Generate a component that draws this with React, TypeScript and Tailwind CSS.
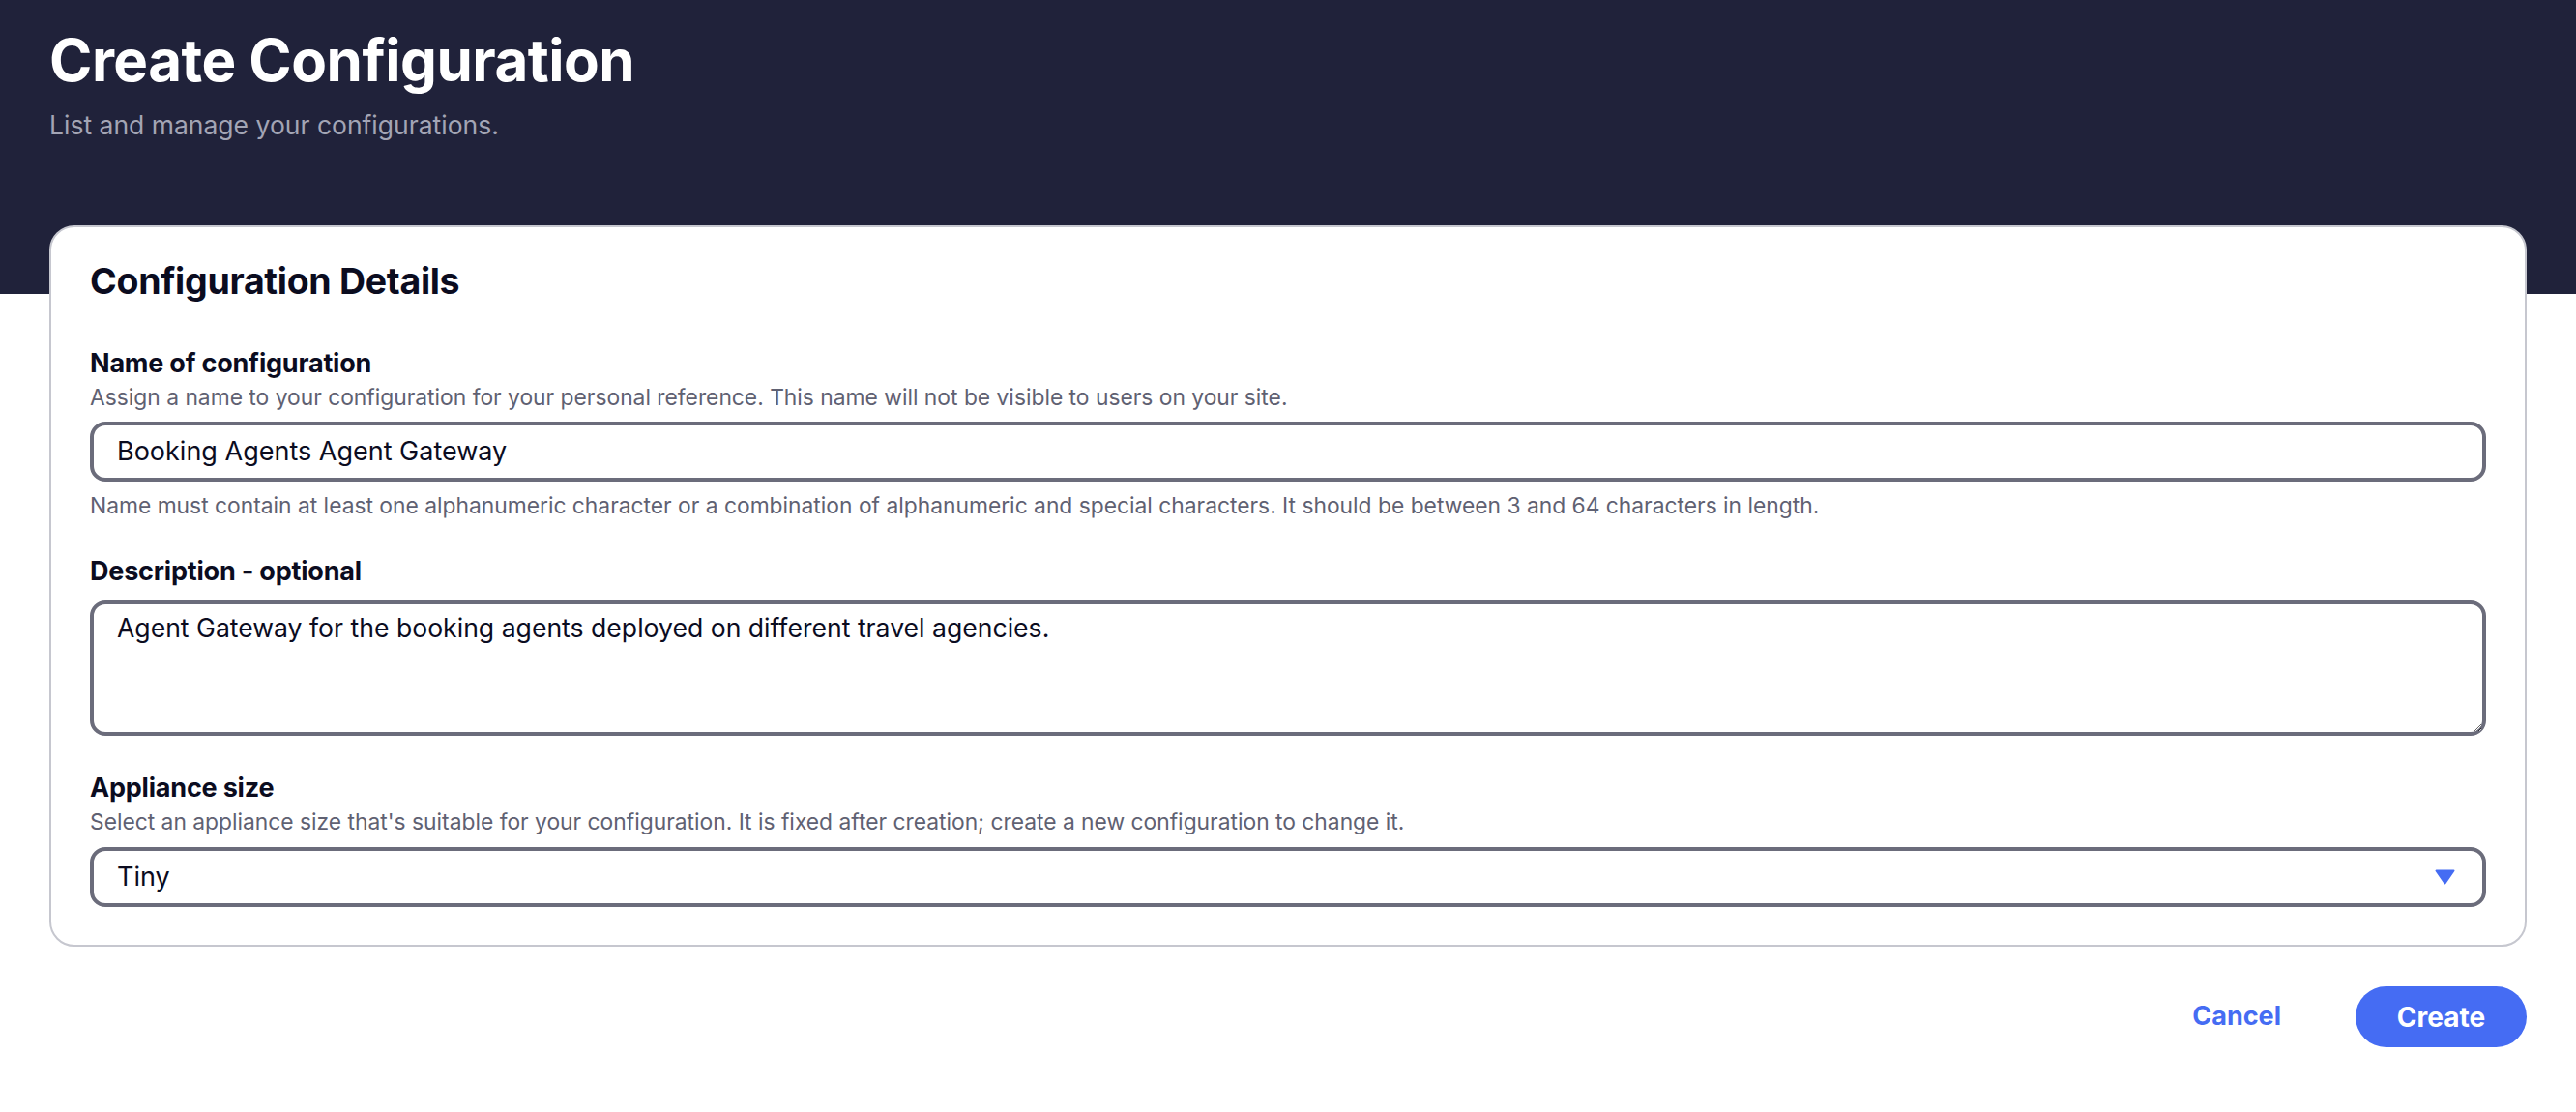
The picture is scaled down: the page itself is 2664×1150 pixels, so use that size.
import React from "react";

const font = { fontFamily: "Inter, 'Noto Sans', sans-serif" };

export default function App() {
  return (
    <div className="min-h-screen bg-white" style={font}>
      {/* ── Header ── */}
      <div className="h-[304px] bg-[#20223a] px-[51px] pt-[22px]">
        <h1 className="text-[60px] leading-[80px] font-bold tracking-[-0.5px] text-white">
          Create Configuration
        </h1>
        <p className="text-[26.5px] leading-[36px] text-[#a3a5b5] mt-[9px]">
          List and manage your configurations.
        </p>
      </div>

      <div className="px-[51px]">
        {/* ── Card ── */}
        <div className="relative -mt-[71px] bg-white rounded-[26px] border-2 border-[#c6c7cf] px-[40px] pt-[36px] pb-[39px]">
          <h2 className="text-[37.5px] leading-[40px] font-bold tracking-[-0.3px] text-[#0b0c1f]">Configuration Details</h2>

          {/* Name */}
          <div className="mt-[49px] text-[27px] leading-[32px] font-bold tracking-[-0.2px] text-[#0b0c1f]">Name of configuration</div>
          <div className="text-[22.8px] leading-[30px] text-[#5f6172] mt-[4px]">
            Assign a name to your configuration for your personal reference. This name will not be visible to users on your site.
          </div>
          <div className="mt-[10px] h-[62px] rounded-[16px] border-4 border-[#6b6c7b] flex items-center px-[24px] text-[27px] text-[#0b0c1f]">
            Booking Agents Agent Gateway
          </div>
          <div className="text-[22.8px] leading-[30px] text-[#5f6172] mt-[10px]">
            Name must contain at least one alphanumeric character or a combination of alphanumeric and special characters. It should be between 3 and 64 characters in length.
          </div>

          {/* Description */}
          <div className="mt-[37px] text-[27px] leading-[32px] font-bold tracking-[-0.2px] text-[#0b0c1f]">Description - optional</div>
          <textarea
            readOnly
            defaultValue="Agent Gateway for the booking agents deployed on different travel agencies."
            className="mt-[14px] block w-full h-[140px] rounded-[16px] border-4 border-[#6b6c7b] px-[24px] pt-[6px] text-[26.6px] leading-[36px] text-[#0b0c1f] outline-none resize-y"
            style={font}
          />

          {/* Appliance size */}
          <div className="mt-[38px] text-[27px] leading-[32px] font-bold tracking-[-0.2px] text-[#0b0c1f]">Appliance size</div>
          <div className="text-[22.8px] leading-[30px] text-[#5f6172] mt-[4px]">
            Select an appliance size that's suitable for your configuration. It is fixed after creation; create a new configuration to change it.
          </div>
          <div className="mt-[11px] h-[62px] rounded-[16px] border-4 border-[#6b6c7b] flex items-center justify-between pl-[24px] pr-[28px] text-[27px] text-[#0b0c1f]">
            <span>Tiny</span>
            <svg width="21" height="16" viewBox="0 0 21 16">
              <path d="M1.5 1.5 H19.5 L10.5 14.5 Z" fill="#456cf3" stroke="#456cf3" strokeWidth="2" strokeLinejoin="round" />
            </svg>
          </div>
        </div>

        {/* ── Actions ── */}
        <div className="flex justify-end items-center gap-[77px] mt-[41px]">
          <button className="text-[27px] font-bold text-[#456cf3]">Cancel</button>
          <button className="w-[177px] h-[63px] rounded-full bg-[#456cf3] text-white text-[28px] font-bold">
            Create
          </button>
        </div>
      </div>
    </div>
  );
}
